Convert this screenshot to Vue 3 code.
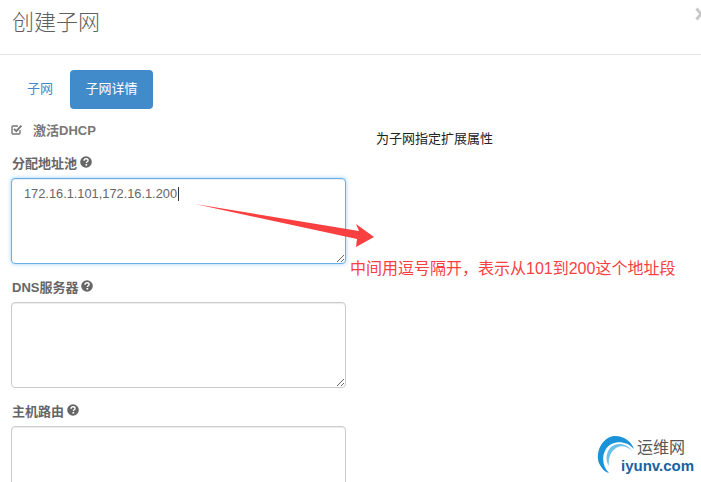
<script setup>
const fields = [
  { label: '分配地址池', value: '172.16.1.101,172.16.1.200', focused: true },
  { label: 'DNS服务器', value: '', focused: false },
  { label: '主机路由', value: '', focused: false }
]
</script>

<template>
  <div class="modal">
    <header class="head">
      <h1>创建子网</h1>
      <svg class="close" width="12" height="14" viewBox="0 0 12 14">
        <path d="M1.5 1.5L10.5 12.5M10.5 1.5L1.5 12.5" stroke="#c8c8c8" stroke-width="3"/>
      </svg>
    </header>
    <nav class="tabs">
      <a class="tab">子网</a>
      <a class="tab active">子网详情</a>
    </nav>
    <div class="body">
      <form class="form">
        <label class="check">
          <svg class="box" width="13" height="13" viewBox="0 0 13 13">
            <path d="M10 7v3a1 1 0 0 1-1 1H3a1 1 0 0 1-1-1V4a1 1 0 0 1 1-1h5" fill="none" stroke="#777" stroke-width="1.4"/>
            <path d="M4 5.8l2.3 2.4L11.4 2.6" fill="none" stroke="#777" stroke-width="1.9"/>
          </svg>
          <span>激活DHCP</span>
        </label>
        <div v-for="f in fields" :key="f.label" class="field">
          <div class="label">
            {{ f.label }}
            <svg class="help" width="12" height="12" viewBox="0 0 12 12">
              <circle cx="6" cy="6" r="5.8" fill="#666"/>
              <path d="M4 4.7c.1-1.3 1-1.9 2.1-1.9 1.2 0 2 .7 2 1.6 0 1.4-1.7 1.3-1.7 2.5" fill="none" stroke="#fff" stroke-width="1.4"/>
              <rect x="5.5" y="8" width="1.7" height="1.6" fill="#fff"/>
            </svg>
          </div>
          <div class="area-wrap">
            <textarea :class="['area', { focused: f.focused }]" :value="f.value" readonly></textarea>
            <i v-if="f.focused" class="caret"></i>
          </div>
        </div>
      </form>
      <p class="desc">为子网指定扩展属性</p>
    </div>

    <svg class="arrow" width="185" height="50" viewBox="0 0 185 50">
      <path d="M0 1L164 28 161 21 179 34 161 44 162 36Z" fill="#f93f3f"/>
    </svg>
    <div class="note">中间用逗号隔开，表示从101到200这个地址段</div>

    <div class="logo">
      <svg class="swoosh" width="40" height="40" viewBox="0 0 40 40">
        <path d="M37 14C33 3 20-2 11 3 2 8-2 22 3 30 5 34 8 37 12 38 6 32 4 22 9 14 14 6 28 4 37 14Z" fill="#1b93d8"/>
        <path d="M35 16C30 8 20 7 14 12 9 17 8 25 12 31 11 24 13 17 19 13 24 10 30 11 35 16Z" fill="#6cc0ec"/>
      </svg>
      <span class="logo-cn">运维网</span>
      <span class="logo-en">iyunv.com</span>
    </div>
  </div>
</template>

<style scoped>
.modal {
  position: relative;
  width: 701px;
  height: 482px;
  overflow: hidden;
  background: #fff;
  font-family: "Liberation Sans", "Noto Sans CJK SC", sans-serif;
  font-size: 13px;
  color: #666;
}
.head {
  position: relative;
  height: 54px;
  border-bottom: 1px solid #e5e5e5;
  padding-left: 12px;
}
.head h1 {
  margin: 0;
  padding-top: 8px;
  font-size: 22px;
  line-height: 30px;
  font-weight: 300;
  color: #5f5f5f;
}
.close {
  position: absolute;
  right: -6px;
  top: 7px;
}
.tabs {
  display: flex;
  gap: 2px;
  padding: 15px 0 0 12px;
}
.tab {
  display: block;
  box-sizing: border-box;
  width: 56px;
  height: 39px;
  text-align: center;
  line-height: 37px;
  border-radius: 4px;
  color: #428bca;
}
.tab.active {
  width: 83px;
  background: #428bca;
  color: #fff;
}
.body {
  display: flex;
  padding-left: 11px;
}
.form {
  width: 335px;
}
.check {
  display: flex;
  align-items: center;
  gap: 10px;
  height: 18px;
  margin: 11px 0 0 -1px;
  font-weight: 700;
  color: #777;
}
.field {
  margin-top: 14px;
}
.check + .field {
  margin-top: 16px;
}
.label {
  display: flex;
  align-items: center;
  gap: 3px;
  box-sizing: border-box;
  height: 18px;
  padding: 0 0 2px 1px;
  font-weight: 700;
  color: #666;
}
.area-wrap {
  position: relative;
  margin-top: 6px;
  height: 86px;
}
.area {
  display: block;
  box-sizing: border-box;
  width: 335px;
  height: 86px;
  padding: 6px 12px;
  border: 1px solid #ccc;
  border-radius: 4px;
  outline: none;
  background: #fff;
  font: 12.8px/18px "Liberation Sans", "Noto Sans CJK SC", sans-serif;
  color: #666;
  box-shadow: inset 0 1px 1px rgba(0, 0, 0, 0.075);
}
.area.focused {
  border-color: #66afe9;
  box-shadow: inset 0 1px 1px rgba(0, 0, 0, 0.075), 0 0 4px rgba(102, 175, 233, 0.6);
}
.caret {
  position: absolute;
  left: 167px;
  top: 9px;
  width: 1px;
  height: 14px;
  background: #333;
}
.desc {
  margin: 21px 0 0 30px;
  line-height: 18px;
  color: #222;
}
.arrow {
  position: absolute;
  left: 195px;
  top: 203px;
}
.note {
  position: absolute;
  left: 350px;
  top: 258px;
  font-size: 16px;
  line-height: 22px;
  white-space: nowrap;
  color: #f93f3f;
}
.logo {
  position: absolute;
  left: 597px;
  top: 434px;
  width: 104px;
  height: 48px;
}
.swoosh {
  position: absolute;
  left: 0;
  top: 1px;
}
.logo-cn {
  position: absolute;
  left: 40px;
  top: 4px;
  font-size: 16px;
  line-height: 20px;
  color: #555;
}
.logo-en {
  position: absolute;
  left: 24px;
  top: 23px;
  font-size: 15px;
  line-height: 18px;
  font-weight: 700;
  color: #17639f;
  white-space: nowrap;
}
</style>
